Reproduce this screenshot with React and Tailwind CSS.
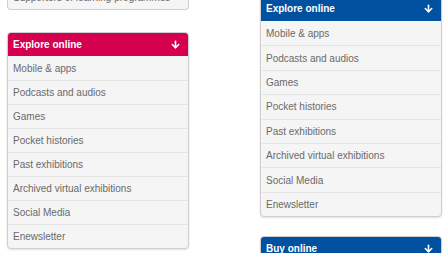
import React from 'react';
import { ArrowDown } from 'lucide-react';

const links = [
  'Mobile & apps',
  'Podcasts and audios',
  'Games',
  'Pocket histories',
  'Past exhibitions',
  'Archived virtual exhibitions',
  'Social Media',
  'Enewsletter',
];

const Panel = ({ title, color, items, rowClass = 'h-[24px]', headClass = 'h-[24px]' }) => (
  <div className="w-[182px] shrink-0 rounded-[4px] border border-[#cfcfcf] bg-[#f5f5f5] overflow-hidden shadow-[0_1px_2px_rgba(0,0,0,0.12)]">
    <div className={`${color} ${headClass} -mx-px -mt-px flex items-center justify-between pl-[6px] pr-[8px] text-white font-bold text-[10px]`}>
      <span>{title}</span>
      <ArrowDown size={11} strokeWidth={3.5} />
    </div>
    {items.map((item, i) => (
      <div
        key={item}
        className={`${rowClass} flex items-center px-[5px] text-[10px] text-[#6a6a6a] ${i > 0 ? 'border-t border-[#e4e4e4]' : ''}`}
      >
        {item}
      </div>
    ))}
  </div>
);

const App = () => {
  return (
    <div
      className="h-[253px] w-[448px] overflow-hidden bg-white flex gap-[71px] pl-[7px]"
      style={{ fontFamily: '"Liberation Sans", Arial, sans-serif' }}
    >
      {/* Left column */}
      <div className="flex flex-col gap-[22px] -mt-[15px]">
        <div className="w-[182px] h-[25px] shrink-0 rounded-b-[4px] border border-t-0 border-[#cfcfcf] bg-[#f5f5f5] flex items-center px-[5px] text-[10px] text-[#6a6a6a]">
          Supporters of learning programmes
        </div>
        <Panel title="Explore online" color="bg-[#d50050]" items={links} />
      </div>

      {/* Right column */}
      <div className="flex flex-col gap-[19px] -mt-[4px]">
        <Panel
          title="Explore online"
          color="bg-[#0051a0]"
          items={links}
          headClass="h-[25px]"
          rowClass="h-[24.4px]"
        />
        <Panel title="Buy online" color="bg-[#0051a0]" items={[]} />
      </div>
    </div>
  );
};

export default App;
